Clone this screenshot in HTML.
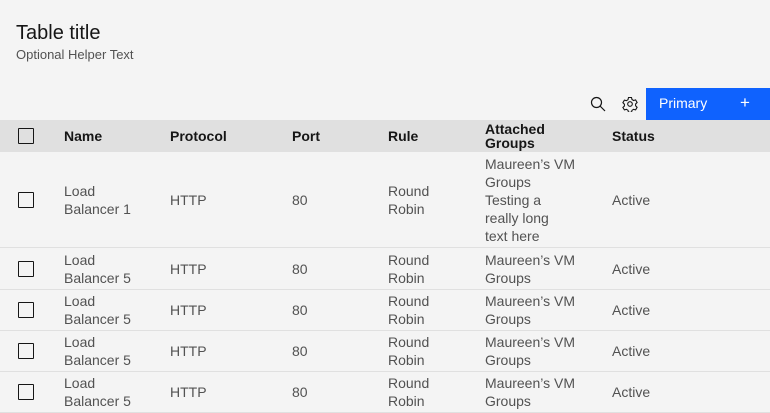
<!DOCTYPE html>
<html><head><style>
*{margin:0;padding:0;box-sizing:border-box}
body{width:770px;height:412px;background:#f4f4f4;font-family:"Liberation Sans",sans-serif;color:#161616;position:relative;overflow:hidden}
.t{position:absolute;left:16px;top:22px;font-size:20px;color:#161616}
.h{position:absolute;left:16px;top:47px;font-size:13px;color:#525252}
.btn{position:absolute;left:646px;top:88px;width:124px;height:32px;background:#0f62fe;color:#fff;font-size:14px}
.row{position:absolute;left:0;width:770px;border-bottom:1px solid #e0e0e0;font-size:14px;color:#525252;line-height:18px}
.row div{position:absolute;top:50%;transform:translateY(-50%)}
.hd{background:#e0e0e0;color:#161616;font-weight:bold;line-height:14px;border:none}
.cb{left:18px;width:16px;height:16px;border:1px solid #161616;border-radius:1px}
</style></head><body>
<div class="t">Table title</div>
<div class="h">Optional Helper Text</div>
<svg style="position:absolute;left:590px;top:96px" width="16" height="16" viewBox="0 0 16 16"><circle cx="6.5" cy="6.5" r="5" fill="none" stroke="#161616" stroke-width="1.2"/><path d="M10 10l5 5" stroke="#161616" stroke-width="1.2"/></svg>
<svg style="position:absolute;left:622px;top:96px" width="16" height="16" viewBox="0 0 16 16"><circle cx="8" cy="8" r="2.3" fill="none" stroke="#161616" stroke-width="1.1"/><path d="M6.5 1.5h3l.5 2 1.6 1 2-.6 1.5 2.6-1.5 1.5v1.8l1.5 1.5-1.5 2.6-2-.6-1.6 1-.5 2h-3l-.5-2-1.6-1-2 .6L.9 11.5l1.5-1.5V8.2L.9 6.7l1.5-2.6 2 .6 1.6-1z" fill="none" stroke="#161616" stroke-width="1.1"/></svg>
<div class="btn"><span style="position:absolute;left:13px;top:7px">Primary</span><span style="position:absolute;left:94px;top:5px;font-size:17px">+</span></div>
<div class="row hd" style="top:120px;height:32px"><div class="cb"></div><div style="left:64px">Name</div><div style="left:170px">Protocol</div><div style="left:292px">Port</div><div style="left:388px">Rule</div><div style="left:485px">Attached<br>Groups</div><div style="left:612px">Status</div></div>
<div class="row" style="top:152px;height:96px"><div class="cb"></div><div style="left:64px">Load<br>Balancer 1</div><div style="left:170px">HTTP</div><div style="left:292px">80</div><div style="left:388px">Round<br>Robin</div><div style="left:485px">Maureen’s VM<br>Groups<br>Testing a<br>really long<br>text here</div><div style="left:612px">Active</div></div>
<div class="row" style="top:248px;height:42px"><div class="cb"></div><div style="left:64px">Load<br>Balancer 5</div><div style="left:170px">HTTP</div><div style="left:292px">80</div><div style="left:388px">Round<br>Robin</div><div style="left:485px">Maureen’s VM<br>Groups</div><div style="left:612px">Active</div></div>
<div class="row" style="top:290px;height:41px"><div class="cb"></div><div style="left:64px">Load<br>Balancer 5</div><div style="left:170px">HTTP</div><div style="left:292px">80</div><div style="left:388px">Round<br>Robin</div><div style="left:485px">Maureen’s VM<br>Groups</div><div style="left:612px">Active</div></div>
<div class="row" style="top:331px;height:41px"><div class="cb"></div><div style="left:64px">Load<br>Balancer 5</div><div style="left:170px">HTTP</div><div style="left:292px">80</div><div style="left:388px">Round<br>Robin</div><div style="left:485px">Maureen’s VM<br>Groups</div><div style="left:612px">Active</div></div>
<div class="row" style="top:372px;height:41px"><div class="cb"></div><div style="left:64px">Load<br>Balancer 5</div><div style="left:170px">HTTP</div><div style="left:292px">80</div><div style="left:388px">Round<br>Robin</div><div style="left:485px">Maureen’s VM<br>Groups</div><div style="left:612px">Active</div></div>
</body></html>
